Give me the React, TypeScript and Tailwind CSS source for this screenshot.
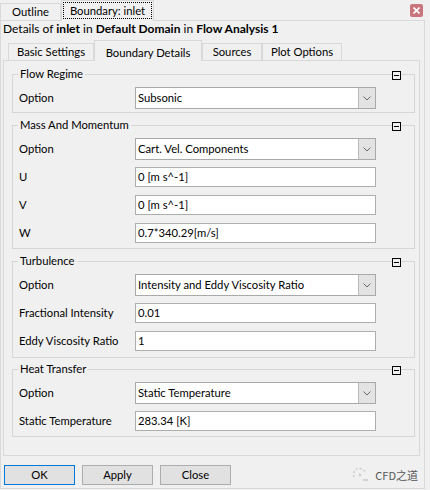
type Row =
  | { kind: "select"; label: string; value: string }
  | { kind: "input"; label: string; value: string };

type Group = { title: string; rows: Row[]; gap: string; pb: string };

const groups: Group[] = [
  {
    title: "Flow Regime",
    gap: "mt-[13px]",
    pb: "pb-0",
    rows: [{ kind: "select", label: "Option", value: "Subsonic" }],
  },
  {
    title: "Mass And Momentum",
    gap: "mt-[12px]",
    pb: "pb-px",
    rows: [
      { kind: "select", label: "Option", value: "Cart. Vel. Components" },
      { kind: "input", label: "U", value: "0 [m s^-1]" },
      { kind: "input", label: "V", value: "0 [m s^-1]" },
      { kind: "input", label: "W", value: "0.7*340.29[m/s]" },
    ],
  },
  {
    title: "Turbulence",
    gap: "mt-[12px]",
    pb: "pb-[2px]",
    rows: [
      { kind: "select", label: "Option", value: "Intensity and Eddy Viscosity Ratio" },
      { kind: "input", label: "Fractional Intensity", value: "0.01" },
      { kind: "input", label: "Eddy Viscosity Ratio", value: "1" },
    ],
  },
  {
    title: "Heat Transfer",
    gap: "mt-[11px]",
    pb: "pb-px",
    rows: [
      { kind: "select", label: "Option", value: "Static Temperature" },
      { kind: "input", label: "Static Temperature", value: "283.34 [K]" },
    ],
  },
];

const innerTabs = [
  { name: "Basic Settings", w: "w-[86px]" },
  { name: "Boundary Details", w: "w-[108px]", active: true },
  { name: "Sources", w: "w-[60px]" },
  { name: "Plot Options", w: "w-[80px]" },
];

function Collapse() {
  return (
    <span className="absolute -top-[4px] right-[13px] flex h-[9px] w-[9px] items-center justify-center border border-black bg-[#f0f0f0]">
      <span className="h-px w-[5px] bg-black" />
    </span>
  );
}

function Chevron() {
  return (
    <svg width="8" height="5" viewBox="0 0 8 5" fill="none">
      <path d="M0.5 0.5 L4 4 L7.5 0.5" stroke="#6a6a6a" strokeWidth="1" />
    </svg>
  );
}

function Field({ row }: { row: Row }) {
  return (
    <div className="flex h-[28px] items-center">
      <span className="w-[116px] text-black">{row.label}</span>
      {row.kind === "select" ? (
        <div className="flex h-[22px] w-[241px] border border-[#a9a9a9] bg-white">
          <span className="flex-1 self-center pl-[2px]">{row.value}</span>
          <span className="flex w-[17px] items-center justify-center border-l border-[#b9b9b9] bg-[#e3e3e3]">
            <Chevron />
          </span>
        </div>
      ) : (
        <div className="flex h-[20px] w-[241px] items-center border border-[#aeaeae] bg-white pl-[2px]">
          {row.value}
        </div>
      )}
    </div>
  );
}

function GroupBox({ group }: { group: Group }) {
  return (
    <div className={`relative border border-[#d6d6d6] pl-[6px] pt-[9px] ${group.gap} ${group.pb}`}>
      <span className="absolute -top-[9px] left-[5px] bg-[#f0f0f0] px-[2px] leading-[16px]">
        {group.title}
      </span>
      <Collapse />
      {group.rows.map((row, i) => (
        <Field key={i} row={row} />
      ))}
    </div>
  );
}

function Watermark() {
  return (
    <div className="ml-auto mr-[6px] flex items-center gap-[5px] text-[#555]">
      <svg width="19" height="14" viewBox="0 0 19 14" fill="none">
        <path d="M3 9 A6 6 0 0 1 14 4" stroke="#c4c4c4" strokeWidth="1.2" strokeDasharray="2 2" />
        <circle cx="9" cy="7" r="1.2" fill="#c8c8c8" />
        <path d="M12 12 H17" stroke="#bdbdbd" strokeWidth="1.2" />
      </svg>
      <span className="font-['Noto_Sans_CJK_SC',sans-serif] text-[11px]">CFD之道</span>
    </div>
  );
}

export default function App() {
  return (
    <div className="h-[490px] w-[430px] bg-[#f0f0f0] font-['Lato',sans-serif] text-[11.25px] leading-[16px] text-black">
      {/* top-level tabs */}
      <div className="flex h-[20px] items-end">
        <div className="flex h-[17px] w-[61px] items-center justify-center border border-b-0 border-[#d9d9d9] bg-[#f0f0f0]">
          Outline
        </div>
        <div className="relative z-10 -mb-px flex h-[21px] w-[93px] items-start border border-b-0 border-[#d9d9d9] bg-[#f0f0f0] px-px pt-px">
          <span className="flex h-[17px] w-full items-center justify-center border border-dotted border-black">
            Boundary: inlet
          </span>
        </div>
        <div className="ml-auto mb-[3px] mr-[7px] flex h-[13px] w-[13px] items-center justify-center rounded-[2px] bg-[#c8757b]">
          <svg width="7" height="7" viewBox="0 0 7 7">
            <path d="M0.5 0.5 L6.5 6.5 M6.5 0.5 L0.5 6.5" stroke="#fff" strokeWidth="1.6" />
          </svg>
        </div>
      </div>

      <div className="h-[469px] w-[425px] border border-[#d9d9d9]">
        <div className="pl-[2px] text-[12px]">
          Details of <b>inlet</b> in <b>Default Domain</b> in <b>Flow Analysis 1</b>
        </div>

        {/* page tabs */}
        <div className="ml-[7px] mt-[3px] flex h-[20px] items-end">
          {innerTabs.map((t) =>
            t.active ? (
              <div
                key={t.name}
                className={`relative z-10 -mb-px flex h-[21px] items-center justify-center border border-b-0 border-[#d9d9d9] bg-[#f0f0f0] pt-[3px] ${t.w}`}
              >
                {t.name}
              </div>
            ) : (
              <div
                key={t.name}
                className={`flex h-[17px] items-center justify-center border border-b-0 border-[#d9d9d9] bg-[#f0f0f0] ${t.w}`}
              >
                {t.name}
              </div>
            )
          )}
        </div>

        <div className="ml-[2px] h-[396px] w-[417px] border border-[#d9d9d9] pl-[8px] pr-[4px]">
          {groups.map((g) => (
            <GroupBox key={g.title} group={g} />
          ))}
        </div>

        {/* dialog buttons */}
        <div className="ml-[3px] mt-[9px] flex h-[20px] items-center gap-[7px]">
          <button className="h-[20px] w-[71px] border border-[#0078d7] bg-[#e1e1e1]">OK</button>
          <button className="h-[20px] w-[71px] border border-[#adadad] bg-[#e1e1e1]">Apply</button>
          <button className="h-[20px] w-[71px] border border-[#adadad] bg-[#e1e1e1]">Close</button>
          <Watermark />
        </div>
      </div>
    </div>
  );
}
